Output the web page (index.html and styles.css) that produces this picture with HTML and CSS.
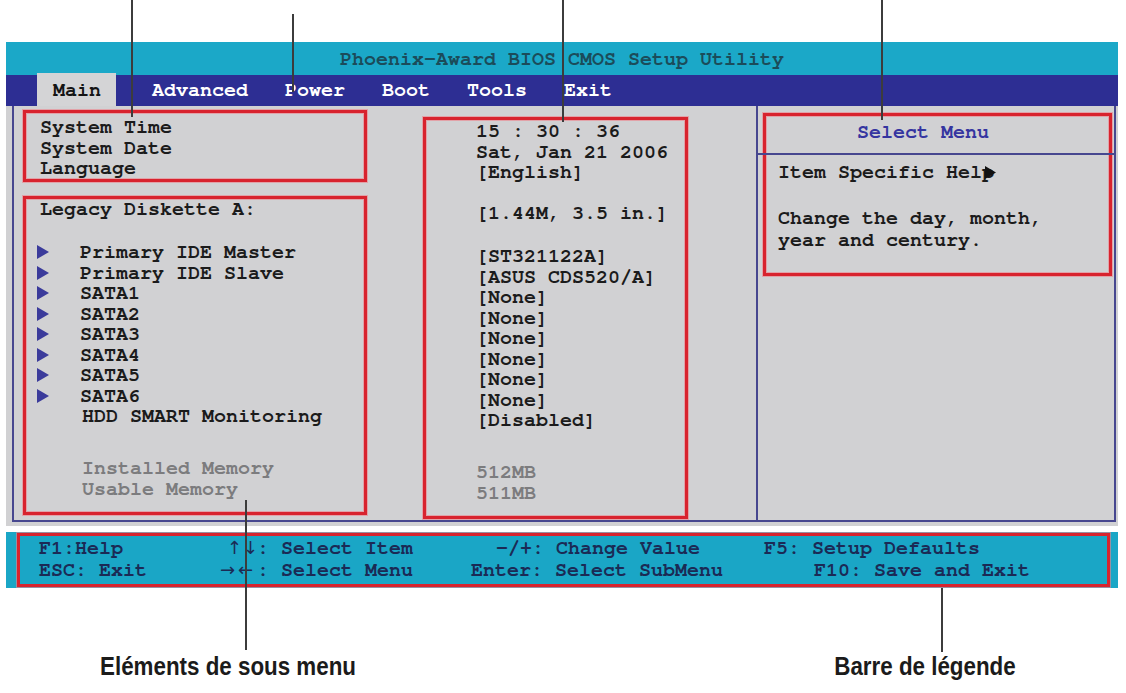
FILE: index.html
```html
<!DOCTYPE html>
<html lang="fr">
<head>
<meta charset="utf-8">
<title>Phoenix-Award BIOS CMOS Setup Utility</title>
<link rel="stylesheet" href="styles.css">
</head>
<body>
<div class="page">
  <div class="screen">
    <header class="titlebar">Phoenix-Award BIOS CMOS Setup Utility</header>
    <nav class="menubar">
      <span class="tab tab-active">Main</span>
      <span class="tab">Advanced</span>
      <span class="tab">Power</span>
      <span class="tab">Boot</span>
      <span class="tab">Tools</span>
      <span class="tab">Exit</span>
    </nav>
    <div class="main">
      <div class="frame">
        <section class="left">
          <div class="labels">
            <div class="box box-sys">
              <div class="row">System Time</div>
              <div class="row">System Date</div>
              <div class="row">Language</div>
            </div>
            <div class="box box-items">
              <div class="row">Legacy Diskette A:</div>
              <div class="row sub gap-a"><svg class="tri" viewBox="0 0 12 14"><polygon points="0,0 12,7 0,14"/></svg><span>Primary IDE Master</span></div>
              <div class="row sub"><svg class="tri" viewBox="0 0 12 14"><polygon points="0,0 12,7 0,14"/></svg><span>Primary IDE Slave</span></div>
              <div class="row sub"><svg class="tri" viewBox="0 0 12 14"><polygon points="0,0 12,7 0,14"/></svg><span>SATA1</span></div>
              <div class="row sub"><svg class="tri" viewBox="0 0 12 14"><polygon points="0,0 12,7 0,14"/></svg><span>SATA2</span></div>
              <div class="row sub"><svg class="tri" viewBox="0 0 12 14"><polygon points="0,0 12,7 0,14"/></svg><span>SATA3</span></div>
              <div class="row sub"><svg class="tri" viewBox="0 0 12 14"><polygon points="0,0 12,7 0,14"/></svg><span>SATA4</span></div>
              <div class="row sub"><svg class="tri" viewBox="0 0 12 14"><polygon points="0,0 12,7 0,14"/></svg><span>SATA5</span></div>
              <div class="row sub"><svg class="tri" viewBox="0 0 12 14"><polygon points="0,0 12,7 0,14"/></svg><span>SATA6</span></div>
              <div class="row ind">HDD SMART Monitoring</div>
              <div class="row ind dim gap-b">Installed Memory</div>
              <div class="row ind dim">Usable Memory</div>
            </div>
          </div>
          <div class="box box-values">
            <div class="row">15 : 30 : 36</div>
            <div class="row">Sat, Jan 21 2006</div>
            <div class="row">[English]</div>
            <div class="row gap-c">[1.44M, 3.5 in.]</div>
            <div class="row gap-a">[ST321122A]</div>
            <div class="row">[ASUS CDS520/A]</div>
            <div class="row">[None]</div>
            <div class="row">[None]</div>
            <div class="row">[None]</div>
            <div class="row">[None]</div>
            <div class="row">[None]</div>
            <div class="row">[None]</div>
            <div class="row">[Disabled]</div>
            <div class="row dim gap-b">512MB</div>
            <div class="row dim">511MB</div>
          </div>
        </section>
        <aside class="right">
          <div class="box box-help">
            <div class="help-head">Select Menu</div>
            <div class="help-rule"></div>
            <div class="help-item"><span>Item Specific Help</span><svg class="help-arrow" viewBox="0 0 11 13"><polygon points="0,0 11,6.5 0,13"/></svg></div>
            <p class="help-text">Change the day, month,<br>year and century.</p>
          </div>
        </aside>
      </div>
    </div>
    <footer class="legend">
      <div class="legend-box">
        <div class="legend-row">
          <span class="k1a">F1:Help</span>
          <span class="k2a arrows arrows-v">↑↓</span>
          <span class="k3a">: Select Item</span>
          <span class="k4a">-/+: Change Value</span>
          <span>F5: Setup Defaults</span>
        </div>
        <div class="legend-row">
          <span class="k1b">ESC: Exit</span>
          <span class="k2b arrows arrows-h">→←</span>
          <span class="k3b">: Select Menu</span>
          <span class="k4b">Enter: Select SubMenu</span>
          <span>F10: Save and Exit</span>
        </div>
      </div>
    </footer>
  </div>
  <div class="captions">
    <span class="cap cap-sub">Eléments de sous menu</span>
    <span class="cap cap-bar">Barre de légende</span>
  </div>
  <div class="ptr ptr-1"></div>
  <div class="ptr ptr-2"></div>
  <div class="ptr ptr-3"></div>
  <div class="ptr ptr-4"></div>
  <div class="ptr ptr-5"></div>
  <div class="ptr ptr-6"></div>
</div>
</body>
</html>
```

FILE: styles.css
```css
html, body {
  margin: 0;
  background: #ffffff;
}

.page {
  position: relative;
  width: 1126px;
  height: 693px;
  overflow: hidden;
  box-sizing: border-box;
  padding-top: 42px;
  background: #ffffff;
  font-family: "Nimbus Mono PS", "Nimbus Mono L", "FreeMono", "Courier New", "Liberation Mono", monospace;
  font-size: 20px;
  font-weight: bold;
  color: #1b1b1b;
}

.screen {
  margin-left: 6px;
  width: 1112px;
}

.titlebar {
  height: 33px;
  line-height: 34px;
  background: #1ba8c8;
  color: #1b4c5a;
  text-align: center;
  white-space: pre;
}

.menubar {
  display: flex;
  height: 31px;
  padding-left: 31px;
  background: #2d2e93;
}

.tab {
  padding: 0 18.5px;
  line-height: 31px;
  color: #ffffff;
}

.tab-active {
  align-self: flex-start;
  margin-top: -2px;
  height: 33px;
  line-height: 35px;
  padding: 0 15px 0 16px;
  margin-right: 17.5px;
  background: #d4d4d6;
  color: #141414;
}

.main {
  height: 420px;
  box-sizing: border-box;
  padding: 0 2px 4px 6px;
  background: #d1d1d3;
}

.frame {
  display: flex;
  height: 416px;
  box-sizing: border-box;
  border: 2px solid #47478f;
  border-top: 0;
}

.left {
  width: 744px;
  box-sizing: border-box;
  border-right: 2px solid #47478f;
  display: grid;
  grid-template-columns: 344px 265px;
  column-gap: 56px;
  align-items: start;
  padding: 4px 0 0 9px;
}

.right {
  flex: 1;
  padding: 7px 2px 0 5px;
}

.box {
  border: 3px solid #d8232e;
  box-shadow: 0 0 0 1px rgba(236, 130, 140, 0.6), inset 0 0 0 1px rgba(236, 130, 140, 0.6);
}

.box-sys {
  padding: 4px 0 0 14px;
}

.box-items {
  margin-top: 14.5px;
  padding: 0 0 13px 14px;
}

.box-values {
  margin-top: 7px;
  padding: 1px 0 13px 50px;
}

.row {
  height: 20.5px;
  line-height: 20.5px;
  white-space: pre;
}

.sub {
  display: flex;
  align-items: center;
}

.tri {
  flex: none;
  width: 12px;
  height: 14px;
  margin-left: -3px;
  margin-right: 31px;
  fill: #3b3b9b;
}

.ind {
  padding-left: 42px;
}

.dim {
  color: #7c7c7e;
}

.gap-a {
  margin-top: 22.5px;
}

.gap-b {
  margin-top: 31.5px;
}

.gap-c {
  margin-top: 20.5px;
}

.box-help {
  padding-bottom: 22px;
}

.help-head {
  padding: 6px 0 10.5px 91px;
  line-height: 20.5px;
  color: #3535a0;
}

.help-rule {
  height: 2px;
  margin: 0 -5px 0 -8px;
  background: #47478f;
}

.help-item {
  display: flex;
  align-items: center;
  padding: 7px 0 0 12px;
  line-height: 20.5px;
  white-space: pre;
}

.help-arrow {
  width: 11px;
  height: 13px;
  margin-left: -9px;
  fill: #111111;
}

.help-text {
  margin: 24.5px 0 0;
  padding-left: 12px;
  line-height: 22px;
}

.legend {
  height: 56px;
  margin-top: 6px;
  box-sizing: border-box;
  padding: 1px 8px 1px 11px;
  background: #1aa6c6;
}

.legend-box {
  height: 54px;
  box-sizing: border-box;
  border: 3px solid #d8232e;
  box-shadow: 0 0 0 1px rgba(236, 130, 140, 0.6);
  padding: 1px 0 0 19px;
}

.legend-row {
  display: flex;
  height: 22px;
  line-height: 22px;
  color: #1b2a55;
  white-space: pre;
}

.arrows {
  font-family: "DejaVu Sans", "Noto Sans", sans-serif;
  font-weight: normal;
  font-size: 18px;
}

.arrows-v {
  letter-spacing: 1px;
}

.arrows-h {
  letter-spacing: 3px;
}

.k1a { width: 188px; }
.k2a { width: 30px; }
.k3a { width: 239px; }
.k4a { width: 268px; }
.k1b { width: 181px; }
.k2b { width: 37px; }
.k3b { width: 214px; }
.k4b { width: 343px; }

.captions {
  display: flex;
  margin-top: 63px;
  padding-left: 28px;
  font-family: "Liberation Sans Narrow", "Liberation Sans", Arial, sans-serif;
  font-size: 26px;
  font-weight: bold;
  line-height: 30px;
  color: #1b1b1b;
}

.cap {
  text-align: center;
  white-space: nowrap;
  transform: scaleX(0.86);
}

.cap-sub {
  width: 400px;
}

.cap-bar {
  width: 260px;
  margin-left: 367px;
}

.ptr {
  position: absolute;
  width: 2px;
  background: #3c3c3c;
}

.ptr-1 { left: 131px; top: 0; height: 117px; }
.ptr-2 { left: 292px; top: 14px; height: 78px; }
.ptr-3 { left: 562px; top: 0; height: 122px; }
.ptr-4 { left: 881px; top: 0; height: 120px; }
.ptr-5 { left: 245px; top: 500px; height: 150px; }
.ptr-6 { left: 941px; top: 588px; height: 64px; }
```
